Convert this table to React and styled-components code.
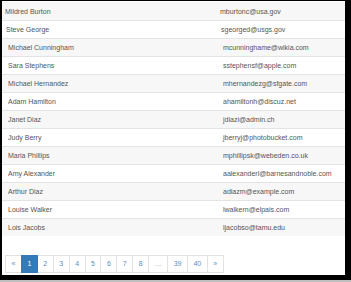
import React from "react";
import styled, { createGlobalStyle } from "styled-components";

const Global = createGlobalStyle`
  html, body { margin: 0; padding: 0; background: #000; }
  body { font-family: "Liberation Sans", Arial, sans-serif; }
`;

const rows = [
  ["Mildred Burton", "mburtonc@usa.gov", 3],
  ["Steve George", "sgeorged@usgs.gov", 4],
  ["Michael Cunningham", "mcunninghame@wikia.com", 6],
  ["Sara Stephens", "sstephensf@apple.com", 6],
  ["Michael Hernandez", "mhernandezg@sfgate.com", 6],
  ["Adam Hamilton", "ahamiltonh@discuz.net", 6],
  ["Janet Diaz", "jdiazi@admin.ch", 6],
  ["Judy Berry", "jberryj@photobucket.com", 6],
  ["Maria Phillips", "mphillipsk@webeden.co.uk", 6],
  ["Amy Alexander", "aalexanderl@barnesandnoble.com", 6],
  ["Arthur Diaz", "adiazm@example.com", 6],
  ["Louise Walker", "lwalkern@elpais.com", 6],
  ["Lois Jacobs", "ljacobso@tamu.edu", 6],
];

const pages = ["«", "1", "2", "3", "4", "5", "6", "7", "8", "…", "39", "40", "»"];

const Screen = styled.div`
  width: 351px;
  height: 282px;
  display: flex;
  flex-direction: column;
  background: #000;
  overflow: hidden;
`;

const Frame = styled.div`
  flex: 1;
  padding: 1px 6px 5px 2px;
  display: flex;
`;

const Shadow = styled.div`
  height: 2px;
  background: #bfbfbf;
`;

const Panel = styled.div`
  flex: 1;
  background: #fff;
  display: flex;
  flex-direction: column;
  padding-top: 1px;
`;

const Table = styled.div`
  display: flex;
  flex-direction: column;
`;

const Row = styled.div`
  display: grid;
  grid-template-columns: 215px 1fr;
  height: 18px;
  align-items: center;
  box-sizing: border-box;
  border-top: ${(p) => (p.$first ? "none" : "1px solid #e3e3e3")};
  background: ${(p) => (p.$striped ? "#f7f7f7" : "#fff")};
  font-size: 7px;
  color: #555;
`;

const Cell = styled.div`
  padding-left: ${(p) => p.$inset}px;
  white-space: nowrap;
`;

const Pager = styled.ul`
  list-style: none;
  margin: 19px 0 0 3px;
  padding: 0;
  display: flex;
`;

const Page = styled.li`
  height: 18px;
  box-sizing: border-box;
  padding: 0 5.5px;
  margin-left: -1px;
  border: 1px solid ${(p) => (p.$active ? "#337ab7" : "#e2e2e2")};
  background: ${(p) => (p.$active ? "#337ab7" : "#fff")};
  color: ${(p) => (p.$active ? "#fff" : p.$muted ? "#999" : "#5a8fc0")};
  font-size: 7px;
  line-height: 16px;
  position: ${(p) => (p.$active ? "relative" : "static")};
  &:first-child { margin-left: 0; }
`;

export default function App() {
  return (
    <>
      <Global />
      <Screen>
        <Frame>
          <Panel>
            <Table>
              {rows.map(([name, email, inset], i) => (
                <Row key={name} $striped={i % 2 === 0} $first={i === 0}>
                  <Cell $inset={inset}>{name}</Cell>
                  <Cell $inset={inset}>{email}</Cell>
                </Row>
              ))}
            </Table>
            <Pager>
              {pages.map((p) => (
                <Page key={p} $active={p === "1"} $muted={p === "…"}>
                  {p}
                </Page>
              ))}
            </Pager>
          </Panel>
        </Frame>
        <Shadow />
      </Screen>
    </>
  );
}
